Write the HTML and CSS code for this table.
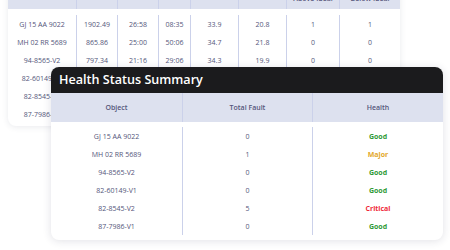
FILE: index.html
```html
<!DOCTYPE html>
<html lang="en">
<head>
<meta charset="utf-8">
<title>Health Status Summary</title>
<link rel="stylesheet" href="styles.css">
</head>
<body>
<div class="page">
  <div class="back-card">
    <div class="grid back-grid head">
      <div class="cell">Object</div>
      <div class="cell">Distance</div>
      <div class="cell">Run</div>
      <div class="cell">Idle</div>
      <div class="cell">Max Temp</div>
      <div class="cell">Min Temp</div>
      <div class="cell two"><span>Temp</span><span>Above Ideal</span></div>
      <div class="cell two"><span>Temp</span><span>Below Ideal</span></div>
    </div>
    <div class="grid back-grid row">
      <div class="cell">GJ 15 AA 9022</div><div class="cell">1902.49</div><div class="cell">26:58</div><div class="cell">08:35</div><div class="cell">33.9</div><div class="cell">20.8</div><div class="cell">1</div><div class="cell">1</div>
    </div>
    <div class="grid back-grid row">
      <div class="cell">MH 02 RR 5689</div><div class="cell">865.86</div><div class="cell">25:00</div><div class="cell">50:06</div><div class="cell">34.7</div><div class="cell">21.8</div><div class="cell">0</div><div class="cell">0</div>
    </div>
    <div class="grid back-grid row">
      <div class="cell">94-8565-V2</div><div class="cell">797.34</div><div class="cell">21:16</div><div class="cell">29:06</div><div class="cell">34.3</div><div class="cell">19.9</div><div class="cell">0</div><div class="cell">0</div>
    </div>
    <div class="grid back-grid row">
      <div class="cell">82-60149-V1</div><div class="cell">640.12</div><div class="cell">18:42</div><div class="cell">12:10</div><div class="cell">35.1</div><div class="cell">20.4</div><div class="cell">0</div><div class="cell">0</div>
    </div>
    <div class="grid back-grid row">
      <div class="cell">82-8545-V2</div><div class="cell">512.77</div><div class="cell">16:05</div><div class="cell">22:48</div><div class="cell">36.2</div><div class="cell">21.1</div><div class="cell">2</div><div class="cell">1</div>
    </div>
    <div class="grid back-grid row">
      <div class="cell">87-7986-V1</div><div class="cell">430.58</div><div class="cell">14:31</div><div class="cell">09:54</div><div class="cell">33.6</div><div class="cell">20.2</div><div class="cell">0</div><div class="cell">0</div>
    </div>
  </div>

  <div class="front-card">
    <div class="title">Health Status Summary</div>
    <div class="grid front-grid head">
      <div class="cell">Object</div>
      <div class="cell">Total Fault</div>
      <div class="cell">Health</div>
    </div>
    <div class="grid front-grid row">
      <div class="cell">GJ 15 AA 9022</div><div class="cell">0</div><div class="cell status good">Good</div>
    </div>
    <div class="grid front-grid row">
      <div class="cell">MH 02 RR 5689</div><div class="cell">1</div><div class="cell status major">Major</div>
    </div>
    <div class="grid front-grid row">
      <div class="cell">94-8565-V2</div><div class="cell">0</div><div class="cell status good">Good</div>
    </div>
    <div class="grid front-grid row">
      <div class="cell">82-60149-V1</div><div class="cell">0</div><div class="cell status good">Good</div>
    </div>
    <div class="grid front-grid row">
      <div class="cell">82-8545-V2</div><div class="cell">5</div><div class="cell status critical">Critical</div>
    </div>
    <div class="grid front-grid row">
      <div class="cell">87-7986-V1</div><div class="cell">0</div><div class="cell status good">Good</div>
    </div>
  </div>
</div>
</body>
</html>
```

FILE: styles.css
```css
* { box-sizing: border-box; }

html, body {
  margin: 0;
  padding: 0;
  background: #ffffff;
}

body {
  width: 450px;
  height: 250px;
  overflow: hidden;
  font-family: "Open Sans", "Noto Sans", sans-serif;
  color: #54567a;
}

.page {
  position: relative;
  display: flow-root;
  width: 450px;
  height: 250px;
  padding: 0 8px;
}

.back-card {
  width: 392px;
  margin-top: -20px;
  background: #ffffff;
  border-radius: 8px;
  overflow: hidden;
  box-shadow: 0 1px 6px rgba(40, 45, 80, 0.10);
}

.grid {
  display: grid;
}

.back-grid {
  grid-template-columns: 68px 41px 41px 32px 48px 48px 53px 61px;
}

.front-grid {
  grid-template-columns: 131px 130px 131px;
}

.cell {
  display: flex;
  align-items: center;
  justify-content: center;
  text-align: center;
  font-size: 7px;
  font-weight: 500;
  white-space: nowrap;
}

.cell + .cell {
  border-left: 1px solid #cbd1ea;
}

.head {
  height: 29px;
  background: #dde1ef;
}

.head .cell {
  font-weight: 600;
  color: #55557a;
}

.back-grid.head .cell.two {
  flex-direction: column;
  align-items: center;
  justify-content: flex-end;
  line-height: 9px;
  padding-bottom: 6px;
}

.row {
  height: 18px;
}

.back-grid.row:nth-child(2) {
  height: 24px;
  padding-top: 6px;
}

.back-grid.row:last-child {
  height: 21px;
  padding-bottom: 3px;
}

.front-card {
  position: absolute;
  left: 51px;
  top: 67px;
  width: 392px;
  background: #ffffff;
  border-radius: 8px;
  overflow: hidden;
  box-shadow: 0 1px 8px rgba(40, 45, 80, 0.14);
}

.title {
  height: 26px;
  background: #1b1b1d;
  color: #ffffff;
  font-size: 12.6px;
  font-weight: 600;
  line-height: 26px;
  padding-left: 8px;
}

.front-grid.row:nth-child(3) {
  height: 23px;
  padding-top: 5px;
}

.front-grid.row:last-child {
  height: 23px;
  padding-bottom: 5px;
}

.status {
  font-weight: 700;
}

.good { color: #2f9a37; }
.major { color: #e3a82b; }
.critical { color: #ef2a3a; }
```
